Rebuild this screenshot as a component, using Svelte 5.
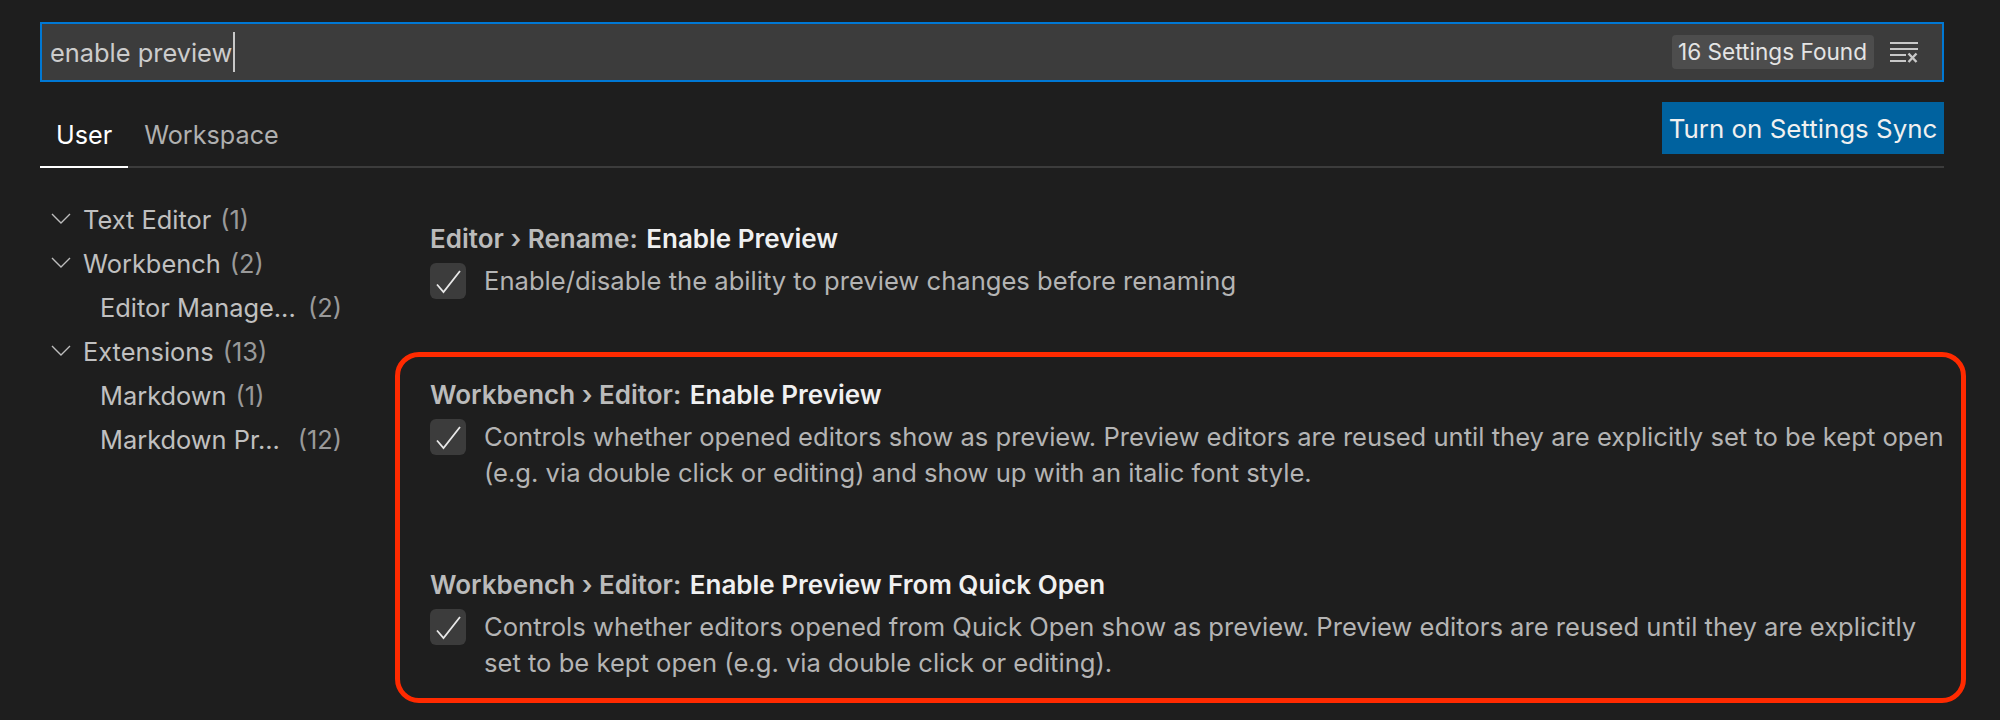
<script>
  const groups = [
    { label: 'Text Editor', count: 1, open: true },
    { label: 'Workbench', count: 2, open: true },
    { label: 'Editor Manage...', count: 2, right: true },
    { label: 'Extensions', count: 13, open: true },
    { label: 'Markdown', count: 1 },
    { label: 'Markdown Pr...', count: 12, right: true }
  ]
</script>

{#snippet check()}
  <span class="check">
    <svg width="36" height="36" viewBox="0 0 36 36" fill="none">
      <path d="M7 21.5 L13.5 29 L30 8" stroke="#e8e8e8" stroke-width="1.8" />
    </svg>
  </span>
{/snippet}

{#snippet setting(prefix, name, desc)}
  <div class="setting">
    <div class="title">{prefix} <b>{name}</b></div>
    <div class="row">
      {@render check()}
      <p>{desc}</p>
    </div>
  </div>
{/snippet}

<div class="page">
  <div class="search">
    <span class="query">enable preview</span>
    <span class="caret"></span>
    <span class="found">16 Settings Found</span>
    <svg class="clear" width="28" height="21" viewBox="0 0 28 21" fill="none" stroke="#c8c8c8" stroke-width="2">
      <path d="M0 1h28M0 7h28M0 13h16M0 19h16" />
      <path d="M18.5 11.5l8 8.5M26.5 11.5l-8 8.5" stroke-width="2.4" />
    </svg>
  </div>

  <div class="tabs">
    <span class="tab active">User</span>
    <span class="tab">Workspace</span>
    <button class="sync">Turn on Settings Sync</button>
  </div>

  <div class="body">
    <nav class="tree">
      {#each groups as g}
        <div class="node" class:top={g.open}>
          {#if g.open}
            <svg class="chev" width="20" height="12" viewBox="0 0 20 12" fill="none">
              <path d="M1 1 L10 10 L19 1" stroke="#bdbdbd" stroke-width="1.4" />
            </svg>
          {/if}
          <span class="label">{g.label}</span>
          <span class="count" class:right={g.right}>({g.count})</span>
        </div>
      {/each}
    </nav>

    <main class="list">
      {@render setting('Editor › Rename:', 'Enable Preview', 'Enable/disable the ability to preview changes before renaming')}
      <div class="marked">
        {@render setting('Workbench › Editor:', 'Enable Preview', 'Controls whether opened editors show as preview. Preview editors are reused until they are explicitly set to be kept open (e.g. via double click or editing) and show up with an italic font style.')}
        {@render setting('Workbench › Editor:', 'Enable Preview From Quick Open', 'Controls whether editors opened from Quick Open show as preview. Preview editors are reused until they are explicitly set to be kept open (e.g. via double click or editing).')}
      </div>
    </main>
  </div>
</div>

<style>
  :global(body) {
    background: #1e1e1e;
    margin: 0;
  }

  .page {
    width: 2000px;
    height: 720px;
    overflow: hidden;
    box-sizing: border-box;
    padding: 22px 56px 0 40px;
    font-family: Inter, "Liberation Sans", sans-serif;
    font-size: 25.6px;
    color: #bbbbbb;
  }

  .search {
    height: 60px;
    box-sizing: border-box;
    border: 2px solid #0078d4;
    background: #3c3c3c;
    display: flex;
    align-items: center;
    padding-left: 8px;
    padding-right: 24px;
  }

  .query {
    color: #cccccc;
    font-size: 25.4px;
  }

  .caret {
    width: 2px;
    height: 40px;
    background: #c8c8c8;
    margin-left: 1px;
  }

  .found {
    margin-left: auto;
    height: 34px;
    line-height: 34px;
    padding: 0 7px 0 6px;
    border-radius: 4px;
    background: #4d4d4d;
    color: #e4e4e4;
    font-size: 22.6px;
  }

  .clear { margin-left: 16px; }

  .tabs {
    height: 86px;
    box-sizing: border-box;
    border-bottom: 2px solid #3c3c3c;
    display: flex;
    align-items: flex-end;
    position: relative;
  }

  .tab {
    padding: 0 16px;
    height: 62px;
    line-height: 58px;
    font-size: 25.2px;
    color: #b0b0b0;
    box-sizing: border-box;
    margin-bottom: -2px;
  }

  .tab.active {
    color: #ffffff;
    border-bottom: 2px solid #ffffff;
  }

  .sync {
    margin-left: auto;
    align-self: flex-start;
    margin-top: 20px;
    width: 282px;
    height: 52px;
    border: 0;
    padding: 0;
    background: #00629f;
    color: #f0f0f0;
    font: inherit;
    font-size: 25.9px;
  }

  .body {
    display: flex;
    padding-top: 29px;
  }

  .tree {
    width: 302px;
    flex: none;
    margin-right: 53px;
  }

  .node {
    height: 44px;
    display: flex;
    align-items: center;
    padding-left: 60px;
    color: #c0c0c0;
    font-size: 25.4px;
  }

  .node.top { padding-left: 11px; }

  .chev { margin-right: 12px; }

  .count {
    color: #999999;
    margin-left: 9px;
  }

  .count.right { margin-left: auto; }

  .list {
    flex: 1;
    padding-left: 35px;
    padding-top: 24px;
  }

  .title {
    font-weight: 600;
    font-size: 26px;
    color: #bbbbbb;
    line-height: 36px;
  }

  .title b {
    font-weight: 600;
    color: #f0f0f0;
    margin-left: 2px;
  }

  .row {
    display: flex;
    margin-top: 6px;
  }

  .check {
    width: 36px;
    height: 36px;
    flex: none;
    border-radius: 6px;
    background: #3c3c3c;
    margin-right: 18px;
  }

  .check svg { display: block; }

  .row p {
    margin: 0;
    line-height: 36px;
    color: #b4b4b4;
  }

  .marked {
    border: 5px solid #ff2a00;
    border-radius: 24px;
    margin: 53px -22px 0 -35px;
    padding: 20px 16px 17px 30px;
    display: flex;
    flex-direction: column;
    gap: 76px;
  }
</style>
